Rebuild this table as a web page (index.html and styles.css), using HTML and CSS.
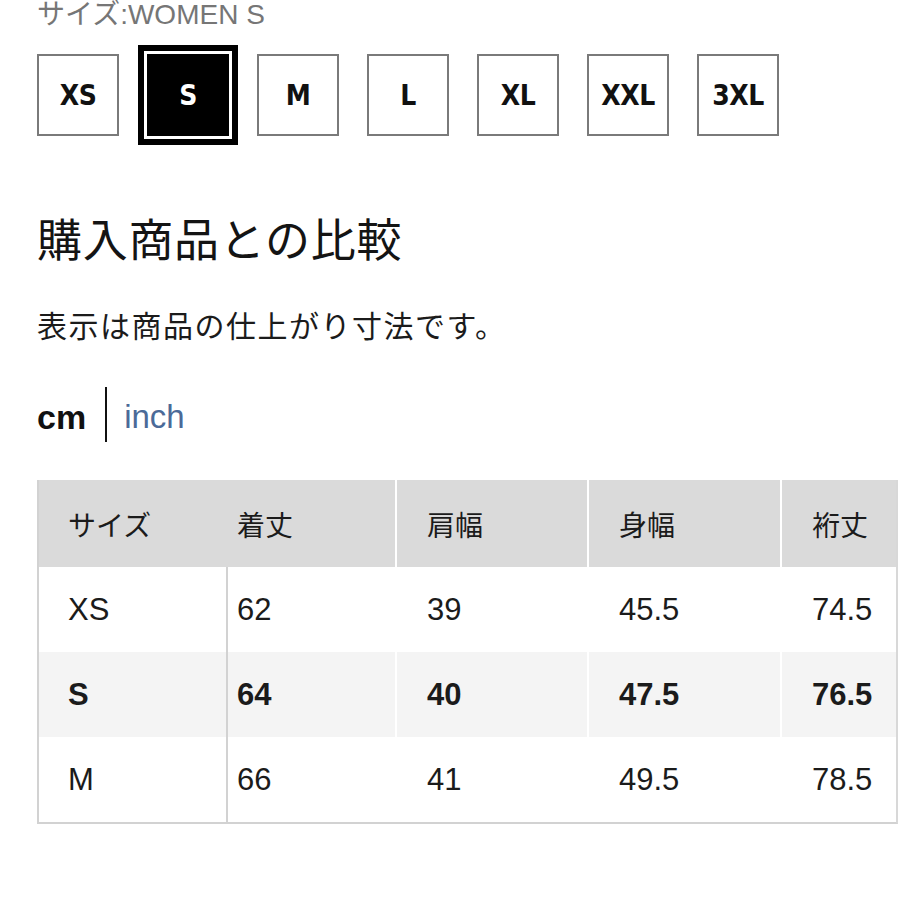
FILE: index.html
```html
<!DOCTYPE html>
<html lang="ja">
<head>
<meta charset="utf-8">
<title>購入商品との比較</title>
<link rel="stylesheet" href="styles.css">
</head>
<body>
<div class="page">
  <div class="size-caption">サイズ:WOMEN S</div>
  <div class="size-picker">
    <div class="size-chip">XS</div>
    <div class="size-chip is-selected">S</div>
    <div class="size-chip">M</div>
    <div class="size-chip">L</div>
    <div class="size-chip">XL</div>
    <div class="size-chip">XXL</div>
    <div class="size-chip">3XL</div>
  </div>

  <h2 class="section-title">購入商品との比較</h2>
  <p class="section-note">表示は商品の仕上がり寸法です。</p>

  <div class="unit-toggle">
    <span class="unit is-active">cm</span>
    <span class="unit-divider"></span>
    <span class="unit unit-link">inch</span>
  </div>

  <div class="size-table">
    <div class="row head">
      <div class="cell c1">サイズ</div>
      <div class="cell c2">着丈</div>
      <div class="cell c3">肩幅</div>
      <div class="cell c4">身幅</div>
      <div class="cell c5">裄丈</div>
    </div>
    <div class="row">
      <div class="cell c1">XS</div>
      <div class="cell c2">62</div>
      <div class="cell c3">39</div>
      <div class="cell c4">45.5</div>
      <div class="cell c5">74.5</div>
    </div>
    <div class="row is-current">
      <div class="cell c1">S</div>
      <div class="cell c2">64</div>
      <div class="cell c3">40</div>
      <div class="cell c4">47.5</div>
      <div class="cell c5">76.5</div>
    </div>
    <div class="row">
      <div class="cell c1">M</div>
      <div class="cell c2">66</div>
      <div class="cell c3">41</div>
      <div class="cell c4">49.5</div>
      <div class="cell c5">78.5</div>
    </div>
  </div>
</div>
</body>
</html>
```

FILE: styles.css
```css
html, body {
  margin: 0;
  padding: 0;
  background: #ffffff;
}

body {
  font-family: "Liberation Sans", "Noto Sans CJK JP", sans-serif;
  color: #1b1b1b;
  overflow: hidden;
}

.page {
  padding-left: 37px;
}

.size-caption {
  font-size: 28px;
  line-height: 30px;
  height: 28px;
  color: #767676;
}

.size-picker {
  display: flex;
  gap: 28px;
  margin-top: 26px;
}

.size-chip {
  box-sizing: border-box;
  width: 82px;
  height: 82px;
  border: 2px solid #7a7a7a;
  display: flex;
  align-items: center;
  justify-content: center;
  font-family: "Liberation Sans Narrow", "DejaVu Sans Condensed", "Liberation Sans", sans-serif;
  font-weight: 700;
  font-size: 28px;
  letter-spacing: -0.5px;
  color: #111;
  background: #fff;
}

.size-chip.is-selected {
  background: #000;
  border-color: #000;
  color: #fff;
  box-shadow: 0 0 0 3px #fff, 0 0 0 9px #000;
}

.section-title {
  margin: 83px 0 0;
  font-size: 45px;
  line-height: 45px;
  letter-spacing: 0.7px;
  font-weight: 400;
  color: #141414;
}

.section-note {
  margin: 48px 0 0;
  font-size: 30px;
  line-height: 30px;
  letter-spacing: 1.5px;
  color: #1b1b1b;
}

.unit-toggle {
  display: flex;
  align-items: center;
  height: 55px;
  margin-top: 45px;
}

.unit {
  font-size: 33px;
  line-height: 40px;
  margin-top: 4px;
}

.unit.is-active {
  font-size: 34px;
  font-weight: 700;
  color: #111;
}

.unit-divider {
  width: 2px;
  height: 55px;
  background: #111;
  margin: 0 17px 0 19px;
}

.unit-link {
  color: #4b6a98;
}

.size-table {
  margin-top: 38px;
  width: 861px;
  box-sizing: border-box;
  border-left: 2px solid #d2d2d2;
  border-right: 2px solid #d8d8d8;
  border-bottom: 2px solid #d2d2d2;
}

.row {
  display: grid;
  grid-template-columns: 189px 169px 192px 193px 1fr;
  height: 85px;
  font-size: 31px;
}

.row.head {
  height: 87px;
  background: #dadada;
  font-size: 28px;
}

.row.is-current {
  background: #f4f4f4;
  font-weight: 700;
}

.cell {
  display: flex;
  align-items: center;
  padding-left: 30px;
  box-sizing: border-box;
}

.cell.c1 {
  padding-left: 29px;
  border-right: 2px solid #d2d2d2;
}

.cell.c2 {
  padding-left: 9px;
}

.cell.c2,
.cell.c3,
.cell.c4 {
  border-right: 2px solid #ffffff;
}

.row.head .cell.c1 {
  border-right-color: transparent;
}
```
